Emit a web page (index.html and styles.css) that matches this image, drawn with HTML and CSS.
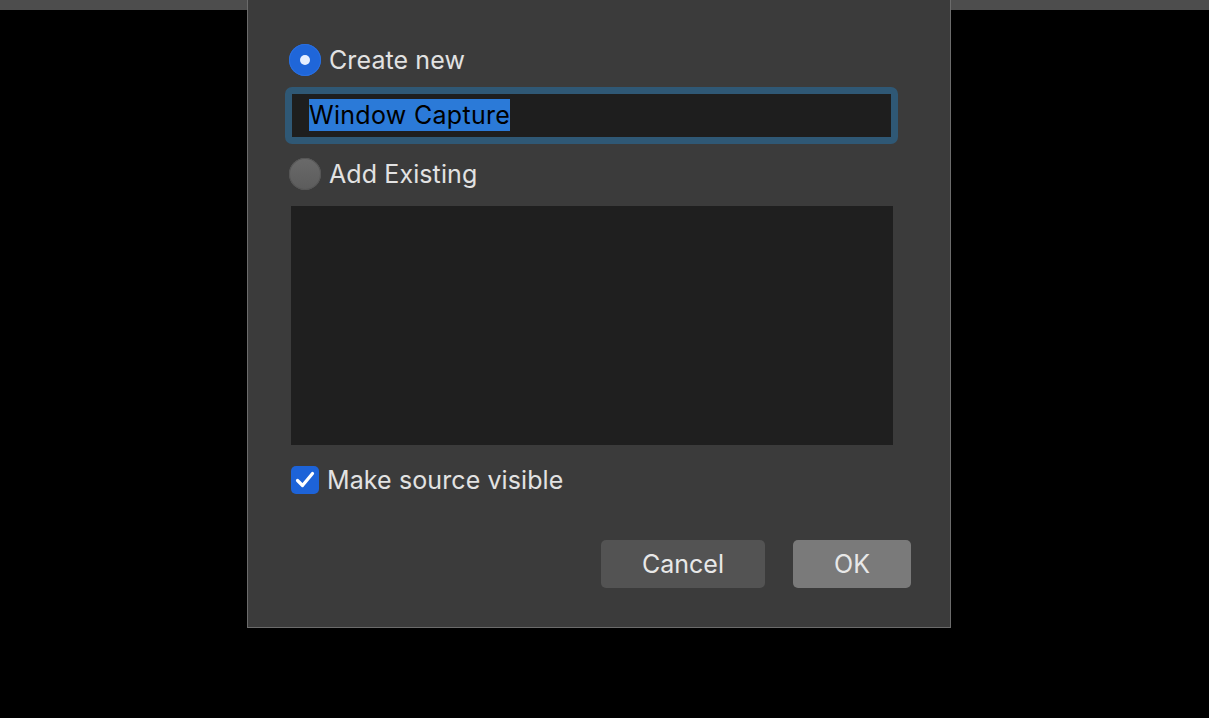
FILE: index.html
```html
<!DOCTYPE html>
<html>
<head>
<meta charset="utf-8">
<link rel="stylesheet" href="styles.css">
</head>
<body>
<div class="topbar"></div>
<div class="dialog">
  <label class="radio-row first">
    <span class="radio on"></span>
    <span class="label">Create new</span>
  </label>
  <div class="field-ring">
    <div class="field"><span class="sel">Window Capture</span></div>
  </div>
  <label class="radio-row second">
    <span class="radio off"></span>
    <span class="label">Add Existing</span>
  </label>
  <div class="list"></div>
  <label class="check-row">
    <span class="check">
      <svg width="22" height="20" viewBox="0 0 22 20"><path d="M3.5 10.5 L8.5 15.5 L18.5 3.5" fill="none" stroke="#ffffff" stroke-width="3.2" stroke-linecap="round" stroke-linejoin="round"/></svg>
    </span>
    <span class="label">Make source visible</span>
  </label>
  <div class="buttons">
    <button class="btn cancel">Cancel</button>
    <button class="btn ok">OK</button>
  </div>
</div>
</body>
</html>
```
FILE: styles.css
```css
html, body {
  margin: 0;
  padding: 0;
  background: #000;
  height: 100%;
  overflow: hidden;
}
body {
  font-family: Inter, "Noto Sans", "Liberation Sans", sans-serif;
  color: #e2e2e2;
}
.topbar {
  height: 10px;
  background: #4d4d4d;
}
.dialog {
  position: absolute;
  left: 247px;
  top: 0;
  width: 704px;
  height: 628px;
  background: #3b3b3b;
  border: 1px solid #6b6b6b;
  border-top: none;
  padding: 44px 39px 0 41px;
  box-sizing: border-box;
  display: flex;
  flex-direction: column;
}
.radio-row {
  display: flex;
  align-items: center;
  height: 32px;
}
.radio {
  width: 32px;
  height: 32px;
  border-radius: 50%;
  box-sizing: border-box;
  flex: none;
  position: relative;
}
.radio.on {
  background: #1f66d9;
  box-shadow: inset 0 0 0 1px #2a6fe0;
}
.radio.on::after {
  content: "";
  position: absolute;
  left: 11px;
  top: 11px;
  width: 10px;
  height: 10px;
  border-radius: 50%;
  background: #e6efff;
}
.radio.off {
  background: linear-gradient(#6a6a6a, #5c5c5c);
  box-shadow: inset 0 0 0 1px #555;
}
.label {
  font-size: 25px;
  margin-left: 8px;
  letter-spacing: 0.1px;
}
.field-ring {
  margin-top: 11px;
  margin-left: -4px;
  width: 613px;
  height: 57px;
  box-sizing: border-box;
  border: 7px solid #2f5875;
  border-radius: 7px;
  background: #1e1e1e;
  display: flex;
  align-items: center;
}
.field {
  padding-left: 17px;
  font-size: 25px;
  color: #000;
  line-height: 32px;
  margin-top: -2px;
}
.sel {
  background: #2b7ad8;
  display: inline-block;
  height: 32px;
  line-height: 32px;
  letter-spacing: 0.3px;
}
.radio-row.second {
  margin-top: 14px;
}
.list {
  margin-top: 16px;
  margin-left: 2px;
  width: 602px;
  height: 239px;
  background: #1f1f1f;
}
.check-row {
  display: flex;
  align-items: center;
  margin-top: 21px;
  margin-left: 2px;
  height: 28px;
}
.check {
  width: 28px;
  height: 28px;
  border-radius: 5px;
  background: #1d63d8;
  display: flex;
  align-items: center;
  justify-content: center;
  flex: none;
}
.check-row .label {
  margin-left: 8px;
}
.buttons {
  display: flex;
  justify-content: flex-end;
  gap: 28px;
  margin-top: 46px;
}
.btn {
  height: 48px;
  border: none;
  border-radius: 5px;
  font-family: inherit;
  font-size: 25px;
  color: #e8e8e8;
  padding: 0;
}
.cancel {
  width: 164px;
  background: #535353;
}
.ok {
  width: 118px;
  background: #7a7a7a;
}
```
